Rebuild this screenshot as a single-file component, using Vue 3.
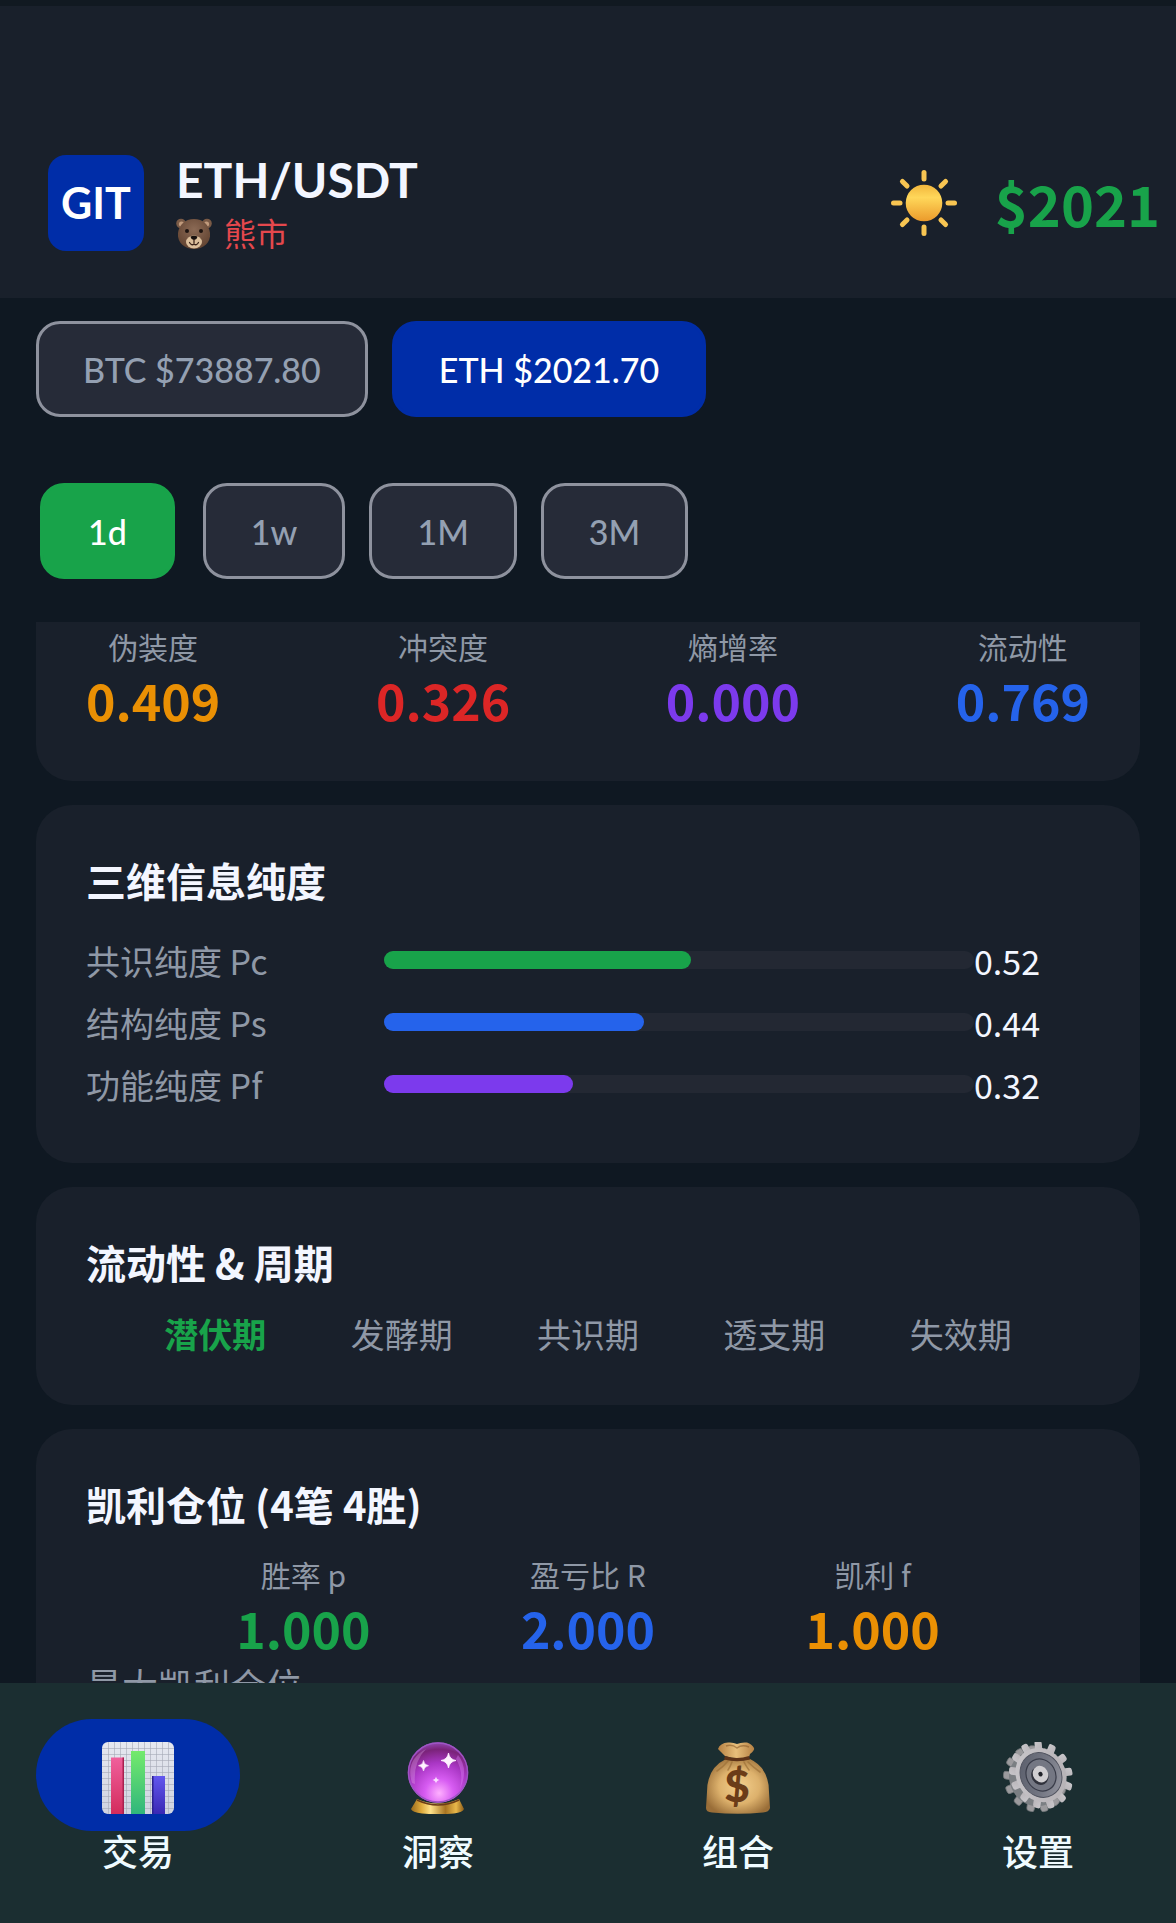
<script setup>
import { ref } from 'vue'

const symbols = [
  { id: 'BTC', price: '73887.80' },
  { id: 'ETH', price: '2021.70' },
]
const activeSymbol = ref('ETH')

const frames = ['1d', '1w', '1M', '3M']
const activeFrame = ref('1d')

const metrics = [
  { label: '伪装度', value: '0.409', tone: 'amber' },
  { label: '冲突度', value: '0.326', tone: 'red' },
  { label: '熵增率', value: '0.000', tone: 'purple' },
  { label: '流动性', value: '0.769', tone: 'blue' },
]

const purity = [
  { label: '共识纯度 Pc', value: 0.52, tone: 'green' },
  { label: '结构纯度 Ps', value: 0.44, tone: 'blue' },
  { label: '功能纯度 Pf', value: 0.32, tone: 'purple' },
]

const stages = ['潜伏期', '发酵期', '共识期', '透支期', '失效期']
const currentStage = '潜伏期'

const kelly = [
  { label: '胜率 p', value: '1.000', tone: 'green' },
  { label: '盈亏比 R', value: '2.000', tone: 'blue' },
  { label: '凯利 f', value: '1.000', tone: 'amber' },
]

const tabs = [
  { id: 'trade', label: '交易' },
  { id: 'insight', label: '洞察' },
  { id: 'portfolio', label: '组合' },
  { id: 'settings', label: '设置' },
]
const activeTab = ref('trade')

// angles for the sun rays and the gear teeth
const rays = [0, 45, 90, 135, 180, 225, 270, 315]
const teeth = Array.from({ length: 13 }, (_, i) => (i * 360) / 13)
const gridLines = Array.from({ length: 11 }, (_, i) => 6 + i * 6)
</script>

<template>
  <div class="app">
    <header class="header">
      <div class="logo">GIT</div>
      <div class="pair">
        <h1>ETH/USDT</h1>
        <p class="market">
          <svg class="bear" viewBox="0 0 36 32" aria-hidden="true">
            <defs>
              <radialGradient id="fur" cx="50%" cy="35%" r="65%">
                <stop offset="0" stop-color="#8b6a55" />
                <stop offset="1" stop-color="#624331" />
              </radialGradient>
            </defs>
            <circle cx="5" cy="5.500" r="4.800" fill="#7a5a46" />
            <circle cx="31" cy="5.500" r="4.800" fill="#7a5a46" />
            <circle cx="5.500" cy="6" r="2.600" fill="#c09a7c" />
            <circle cx="30.500" cy="6" r="2.600" fill="#c09a7c" />
            <path d="M18 1C27 1 33 7 34 15C35 25 27 31 18 31S1 25 2 15C3 7 9 1 18 1Z" fill="url(#fur)" />
            <ellipse cx="18" cy="24" rx="8" ry="6.500" fill="#dcbf9c" />
            <circle cx="11" cy="13" r="2" fill="#1d1310" />
            <circle cx="25" cy="13" r="2" fill="#1d1310" />
            <path d="M14.500 18.500Q18 17 21.500 18.500Q21 21.500 18 22Q15 21.500 14.500 18.500Z" fill="#17100e" />
            <path d="M18 22V25M13.500 24.500Q15.500 28 18 26Q20.500 28 22.500 24.500" fill="none" stroke="#3c241a" stroke-width="1.300" stroke-linecap="round" />
          </svg>
          <span>熊市</span>
        </p>
      </div>
      <button class="theme" type="button" aria-label="☀">
        <svg viewBox="0 0 66 66" aria-hidden="true">
          <defs>
            <linearGradient id="disc" x1="0" y1="0" x2="0" y2="1">
              <stop offset="0" stop-color="#f2b63c" />
              <stop offset="0.350" stop-color="#ffd75a" />
              <stop offset="1" stop-color="#eb9a2b" />
            </linearGradient>
          </defs>
          <rect v-for="a in rays" :key="a" x="30.500" y="0" width="5" height="11.500" rx="2.500" fill="#f8c552" :transform="`rotate(${a} 33 33)`" />
          <circle cx="33" cy="33" r="18.300" fill="url(#disc)" />
        </svg>
      </button>
      <strong class="price">$2021</strong>
    </header>

    <div class="symbols">
      <button v-for="s in symbols" :key="s.id" type="button" class="chip" :class="{ primary: s.id === activeSymbol }" @click="activeSymbol = s.id">
        {{ s.id }} ${{ s.price }}
      </button>
    </div>

    <div class="frames">
      <button v-for="f in frames" :key="f" type="button" class="chip" :class="{ picked: f === activeFrame }" @click="activeFrame = f">
        {{ f }}
      </button>
    </div>

    <main class="content">
      <section class="card card-first">
        <div class="metrics spread">
          <div v-for="m in metrics" :key="m.label" class="metric">
            <span class="metric-label">{{ m.label }}</span>
            <span class="metric-value" :class="m.tone">{{ m.value }}</span>
          </div>
        </div>
      </section>

      <section class="card">
        <h2>三维信息纯度</h2>
        <div v-for="p in purity" :key="p.label" class="purity-row">
          <span class="purity-label">{{ p.label }}</span>
          <div class="track">
            <div class="fill" :class="p.tone" :style="{ width: p.value * 100 + '%' }"></div>
          </div>
          <span class="purity-value">{{ p.value.toFixed(2) }}</span>
        </div>
      </section>

      <section class="card">
        <h2>流动性 &amp; 周期</h2>
        <div class="stages">
          <span v-for="s in stages" :key="s" :class="{ current: s === currentStage }">{{ s }}</span>
        </div>
      </section>

      <section class="card">
        <h2>凯利仓位 (4笔 4胜)</h2>
        <div class="metrics">
          <div v-for="k in kelly" :key="k.label" class="metric">
            <span class="metric-label">{{ k.label }}</span>
            <span class="metric-value" :class="k.tone">{{ k.value }}</span>
          </div>
        </div>
        <p class="note">最大凯利仓位</p>
      </section>
    </main>

    <nav class="tabs">
      <button v-for="t in tabs" :key="t.id" type="button" class="tab" :class="{ active: t.id === activeTab }" @click="activeTab = t.id">
        <span class="pill">
          <svg v-if="t.id === 'trade'" viewBox="0 0 72 72" aria-hidden="true">
            <defs>
              <linearGradient id="paper" x1="0" y1="0" x2="0" y2="1">
                <stop offset="0" stop-color="#e6e8f0" />
                <stop offset="1" stop-color="#cfd3e0" />
              </linearGradient>
              <linearGradient id="barPink" x1="0" y1="0" x2="0" y2="1">
                <stop offset="0" stop-color="#f0609c" />
                <stop offset="1" stop-color="#d32c5c" />
              </linearGradient>
              <linearGradient id="barGreen" x1="0" y1="0" x2="0" y2="1">
                <stop offset="0" stop-color="#74ea6c" />
                <stop offset="1" stop-color="#30b67c" />
              </linearGradient>
              <linearGradient id="barBlue" x1="0" y1="0" x2="0" y2="1">
                <stop offset="0" stop-color="#6257ee" />
                <stop offset="1" stop-color="#3a28b4" />
              </linearGradient>
            </defs>
            <rect width="72" height="72" rx="6" fill="url(#paper)" />
            <g stroke="#a4a8b6" stroke-width="0.600">
              <path v-for="n in gridLines" :key="n" :d="`M${n + 0.5} 0V72M0 ${n + 0.5}H72`" />
            </g>
            <path d="M9 15.500h13V72H9z" fill="url(#barPink)" />
            <path d="M20.500 15.500H22V72h-1.500z" fill="#a8204f" />
            <path d="M29 9h14v63H29z" fill="url(#barGreen)" />
            <path d="M50 34h13v38H50z" fill="url(#barBlue)" />
            <path d="M50 34h1.500v38H50z" fill="#2b2090" />
          </svg>

          <svg v-else-if="t.id === 'insight'" viewBox="0 0 72 72" aria-hidden="true">
            <defs>
              <radialGradient id="ball" cx="52%" cy="84%" r="84%">
                <stop offset="0" stop-color="#ffb0ff" />
                <stop offset="0.280" stop-color="#d75cf2" />
                <stop offset="0.600" stop-color="#a936c4" />
                <stop offset="0.860" stop-color="#7a2379" />
                <stop offset="1" stop-color="#9348b4" />
              </radialGradient>
              <linearGradient id="gold" x1="0" y1="0" x2="1" y2="0">
                <stop offset="0" stop-color="#9a6a1d" />
                <stop offset="0.200" stop-color="#e0ac3c" />
                <stop offset="0.370" stop-color="#ffe28a" />
                <stop offset="0.650" stop-color="#a87422" />
                <stop offset="0.850" stop-color="#e9b84a" />
                <stop offset="1" stop-color="#8e5d18" />
              </linearGradient>
            </defs>
            <path d="M15 57Q36 66 57 57L62 67Q61 70 52 71.500Q36 73 20 71.500Q10 70 9 67Z" fill="url(#gold)" />
            <path d="M15 58Q36 68 57 58" fill="none" stroke="#6c3c17" stroke-width="1.500" />
            <circle cx="36" cy="30.500" r="30.300" fill="url(#ball)" />
            <circle cx="36" cy="30.500" r="29.500" fill="none" stroke="#9d55c5" stroke-width="1.400" />
            <path d="M10 41Q3 18 24 7Q11 20 13 42Z" fill="#e5a7ed" opacity="0.330" />
            <path d="M56 13Q67 27 58 47Q62 30 54 17Z" fill="#e48bff" opacity="0.350" />
            <g fill="#fff2ff">
              <path d="M46.500 11Q47.500 17.500 54 18.500Q47.500 19.500 46.500 26Q45.500 19.500 39 18.500Q45.500 17.500 46.500 11Z" stroke="#fff2ff" stroke-width="0.800" />
              <path d="M21.500 18.500Q22 23 26.500 23.700Q22 24.400 21.500 29Q21 24.400 16.500 23.700Q21 23 21.500 18.500Z" stroke="#fff2ff" stroke-width="0.600" />
              <path d="M34 34.500Q34.500 37.500 37.500 38Q34.500 38.500 34 41.500Q33.500 38.500 30.500 38Q33.500 37.500 34 34.500Z" opacity="0.850" />
            </g>
          </svg>

          <svg v-else-if="t.id === 'portfolio'" viewBox="0 0 72 72" aria-hidden="true">
            <defs>
              <radialGradient id="sack" cx="52%" cy="50%" r="58%">
                <stop offset="0" stop-color="#f3cf8d" />
                <stop offset="0.550" stop-color="#ddb16c" />
                <stop offset="1" stop-color="#9a6e38" />
              </radialGradient>
              <linearGradient id="frill" x1="0" y1="0" x2="1" y2="0">
                <stop offset="0" stop-color="#b58043" />
                <stop offset="0.500" stop-color="#e8bf7b" />
                <stop offset="1" stop-color="#b68144" />
              </linearGradient>
            </defs>
            <path d="M24 17Q35 20 48 17Q67 26 67 50L68 66Q67 70 61 70.500Q36 73 10 70.500Q4 70 4 66L5 50Q5 26 24 17Z" fill="url(#sack)" />
            <path d="M26 19Q21 25 15 29M30 20Q28 25 26 28M46 20Q51 25 58 30M42 20Q44 24 47 28" fill="none" stroke="#9d7038" stroke-width="1.600" stroke-linecap="round" opacity="0.700" />
            <path d="M23 14L16 7Q18 1 26 .500Q31 0 35 2Q39 0 45 .500Q50 2 52 6Q53 8 48 12L47 15Q35 18 23 14Z" fill="url(#frill)" />
            <path d="M24 4Q30 2 35 6Q40 2 47 5" fill="none" stroke="#8b5c29" stroke-width="1.500" opacity="0.600" />
            <path d="M23 14Q35 18 47 14L48 17.500Q35 21 22 17.500Z" fill="#5e3318" />
            <text x="35" y="60" text-anchor="middle" class="dollar">$</text>
          </svg>

          <svg v-else viewBox="0 0 72 72" aria-hidden="true">
            <defs>
              <linearGradient id="steel" x1="0" y1="0" x2="1" y2="1">
                <stop offset="0" stop-color="#c9c7cb" />
                <stop offset="1" stop-color="#b4b0b4" />
              </linearGradient>
              <linearGradient id="dish" x1="0" y1="0" x2="1" y2="1">
                <stop offset="0" stop-color="#565a68" />
                <stop offset="0.550" stop-color="#747783" />
                <stop offset="1" stop-color="#9b9ca6" />
              </linearGradient>
            </defs>
            <g transform="translate(33 37) rotate(-30) scale(0.900 1)">
              <rect v-for="a in teeth" :key="a" x="-4" y="-34" width="8" height="14" rx="2.500" fill="#9b9a9d" stroke="#74787b" stroke-width="0.800" :transform="`rotate(${a})`" />
              <circle r="28" fill="#7b7f83" />
            </g>
            <g transform="translate(39 33) rotate(-30) scale(0.880 1)">
              <rect v-for="a in teeth" :key="a" x="-4" y="-35" width="8" height="14" rx="2.500" fill="url(#steel)" :transform="`rotate(${a})`" />
              <circle r="28" fill="url(#steel)" />
              <circle r="23" fill="url(#dish)" stroke="#50535f" stroke-width="1" />
              <circle r="16.500" fill="#747783" stroke="#393c49" stroke-width="1.300" />
              <circle cx="-1.500" cy="0" r="9.500" fill="#30323c" />
              <circle cx="0" cy="-1" r="8.500" fill="#d0ced1" />
              <circle cx="0" cy="-1" r="2.400" fill="#202229" />
            </g>
          </svg>
        </span>
        <span class="tab-label">{{ t.label }}</span>
      </button>
    </nav>
  </div>
</template>

<style>
body {
  margin: 0;
  background: #0f1822;
}
</style>

<style scoped>
.app {
  height: 100vh;
  display: flex;
  flex-direction: column;
  box-sizing: border-box;
  border-top: 6px solid #111921;
  background: #0f1822;
  color: #f3f6ff;
  font-family: Lato, "Noto Sans CJK SC", sans-serif;
  overflow: hidden;
}

h1,
h2,
p {
  margin: 0;
}

button {
  font-family: inherit;
  cursor: pointer;
}

.header {
  display: flex;
  align-items: center;
  padding: 143px 16px 41px 48px;
  background: #19202b;
}

.logo {
  width: 96px;
  height: 96px;
  border-radius: 18px;
  background: #002da8;
  color: #fff;
  font-size: 43px;
  font-weight: 700;
  line-height: 96px;
  text-align: center;
}

.pair {
  margin-left: 32px;
  flex: 1;
}

.pair h1 {
  font-size: 48px;
  font-weight: 700;
  line-height: 62px;
}

.market {
  display: flex;
  align-items: center;
  gap: 12px;
  color: #e5484d;
  font-size: 32px;
  line-height: 46px;
}

.bear {
  width: 36px;
  height: 32px;
}

.theme {
  display: flex;
  margin-right: 38px;
  padding: 0;
  border: 0;
  background: none;
}

.theme svg {
  width: 66px;
  height: 66px;
}

.price {
  color: #18a34a;
  font-family: "Noto Sans CJK SC", sans-serif;
  font-size: 56px;
  line-height: 64px;
}

.symbols,
.frames {
  display: flex;
  gap: 24px;
  padding: 23px 36px 0;
}

.frames {
  padding: 66px 36px 43px;
}

.chip {
  height: 96px;
  padding: 0 45px;
  border: 3px solid #8e929e;
  border-radius: 24px;
  background: #262b38;
  color: #94a0b2;
  font-size: 34px;
  font-weight: 500;
}

.symbols .chip {
  padding: 0 44px;
}

.chip.primary {
  border-color: #002da8;
  background: #002da8;
  color: #fff;
}

.chip.picked {
  margin: 0 4px;
  border-color: #18a34a;
  background: #18a34a;
  color: #fff;
}

.content {
  flex: 1;
  min-height: 0;
  display: flex;
  flex-direction: column;
  gap: 24px;
  padding: 0 36px;
  font-family: "Noto Sans CJK SC", sans-serif;
  overflow: hidden;
}

.card {
  flex: none;
  padding: 48px 50px;
  border-radius: 36px;
  background: #19202b;
}

.card-first {
  padding-top: 3px;
  padding-bottom: 50px;
  border-radius: 0 0 36px 36px;
}

.card h2 {
  margin-bottom: 22px;
  font-size: 40px;
  font-weight: 700;
  line-height: 54px;
}

.metrics {
  display: flex;
  justify-content: space-evenly;
}

.metrics.spread {
  justify-content: space-between;
}

.metric {
  display: flex;
  flex-direction: column;
  align-items: center;
}

.metric-label {
  color: #8f98a6;
  font-size: 30px;
  line-height: 42px;
}

.metric-value {
  font-size: 50px;
  font-weight: 700;
  line-height: 64px;
}

.metric-value.green { color: #18a34a; }
.metric-value.blue { color: #2563eb; }
.metric-value.purple { color: #7c3aed; }
.metric-value.amber { color: #ea9004; }
.metric-value.red { color: #dc2626; }

.purity-row {
  display: flex;
  align-items: center;
  height: 62px;
  font-size: 34px;
}

.purity-label {
  width: 298px;
  color: #8f98a6;
}

.track {
  flex: 1;
  height: 18px;
  border-radius: 9px;
  background: #232833;
}

.fill {
  height: 100%;
  border-radius: 9px;
}

.fill.green { background: #18a34a; }
.fill.blue { background: #2563eb; }
.fill.purple { background: #7c3aed; }

.purity-value {
  width: 116px;
}

.stages {
  display: flex;
  justify-content: space-evenly;
  margin: 0 -6px;
  color: #8f98a6;
  font-size: 34px;
  line-height: 46px;
}

.stages .current {
  color: #18a34a;
  font-weight: 700;
}

.note {
  color: #8f98a6;
  font-size: 36px;
  line-height: 50px;
}

.tabs {
  height: 240px;
  display: flex;
  justify-content: space-between;
  align-items: flex-start;
  box-sizing: border-box;
  padding: 36px 36px 0;
  background: #1b2e31;
}

.tab {
  display: flex;
  flex-direction: column;
  align-items: center;
  padding: 0;
  border: 0;
  background: none;
  color: #effbff;
}

.pill {
  display: flex;
  justify-content: center;
  align-items: center;
  width: 204px;
  height: 112px;
  border-radius: 56px;
}

.pill svg {
  width: 72px;
  height: 72px;
  margin-top: 6px;
}

.active .pill {
  background: #002da8;
}

.tab-label {
  font-size: 36px;
  font-weight: 500;
  line-height: 42px;
}

.dollar {
  fill: #6b3c18;
  font-family: Lato, sans-serif;
  font-size: 44px;
  font-weight: 900;
}
</style>
